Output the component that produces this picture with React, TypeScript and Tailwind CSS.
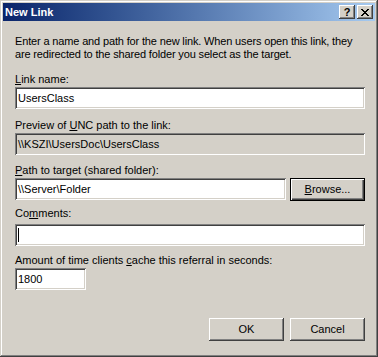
const sunken =
  'shadow-[inset_1px_1px_0_#808080,inset_-1px_-1px_0_#ffffff,inset_2px_2px_0_#404040,inset_-2px_-2px_0_#d4d0c8]'
const raised =
  'shadow-[inset_-1px_-1px_0_#404040,inset_1px_1px_0_#ffffff,inset_-2px_-2px_0_#808080,inset_2px_2px_0_#d4d0c8]'

// classic close glyph, one row per entry
const closeRows = [
  [0, 1, 6, 7],
  [1, 2, 5, 6],
  [2, 3, 4, 5],
  [3, 4],
  [2, 3, 4, 5],
  [1, 2, 5, 6],
  [0, 1, 6, 7],
]

function CloseGlyph() {
  return (
    <svg width="8" height="7" viewBox="0 0 8 7" shapeRendering="crispEdges">
      {closeRows.map((row, y) =>
        row.map((x) => <rect key={`${y}-${x}`} x={x} y={y} width="1" height="1" fill="#000" />),
      )}
    </svg>
  )
}

function TitleBar() {
  return (
    <div className="h-[18px] flex items-center bg-gradient-to-r from-[#0a246a] to-[#a6caf0] pl-[2px] pr-[2px]">
      <span className="flex-1 text-white font-bold text-[11px] leading-[18px]">New Link</span>
      <div className="flex gap-[2px]">
        <div className={`w-[16px] h-[14px] bg-[#d4d0c8] ${raised} flex items-center justify-center`}>
          <span className="font-bold text-[11px] leading-[11px] text-black">?</span>
        </div>
        <div className={`w-[16px] h-[14px] bg-[#d4d0c8] ${raised} flex items-center justify-center`}>
          <CloseGlyph />
        </div>
      </div>
    </div>
  )
}

function Field({ value, width = 'w-[350px]', readOnly = false, caret = false }: {
  value: string
  width?: string
  readOnly?: boolean
  caret?: boolean
}) {
  return (
    <div
      className={`${width} h-[22px] ${sunken} ${readOnly ? 'bg-[#d4d0c8]' : 'bg-white'} flex items-center pl-[3px] shrink-0`}
    >
      {caret ? <div className="w-px h-[14px] bg-black" /> : <span className="whitespace-nowrap">{value}</span>}
    </div>
  )
}

function Button({ children, isDefault = false }: { children: React.ReactNode; isDefault?: boolean }) {
  return (
    <div
      className={`w-[75px] h-[23px] bg-[#d4d0c8] flex items-center justify-center shrink-0 ${
        isDefault
          ? 'border border-black shadow-[inset_1px_1px_0_#ffffff,inset_-1px_-1px_0_#404040,inset_-2px_-2px_0_#808080]'
          : raised
      }`}
    >
      {children}
    </div>
  )
}

export default function App() {
  return (
    <div
      className="w-[378px] h-[357px] bg-[#d4d0c8] p-[3px] flex flex-col text-[11px] leading-[13px] text-black font-['Liberation_Sans',Arial,sans-serif] shadow-[inset_-1px_-1px_0_#404040,inset_1px_1px_0_#d4d0c8,inset_-2px_-2px_0_#808080,inset_2px_2px_0_#ffffff]"
    >
      <TitleBar />
      <div className="flex flex-col pl-[12px]">
        <p className="mt-[14px] whitespace-nowrap tracking-[-0.15px]">
          Enter a name and path for the new link. When users open this link, they
          <br />
          are redirected to the shared folder you select as the target.
        </p>

        <label className="mt-[12px]">
          <u>L</u>ink name:
        </label>
        <div className="mt-[1px]">
          <Field value="UsersClass" />
        </div>

        <label className="mt-[10px]">
          Preview of <u>U</u>NC path to the link:
        </label>
        <div className="mt-[1px]">
          <Field value="\\KSZI\UsersDoc\UsersClass" readOnly />
        </div>

        <label className="mt-[9px]">
          <u>P</u>ath to target (shared folder):
        </label>
        <div className="mt-[1px] w-[350px] flex gap-[4px]">
          <Field value="\\Server\Folder" width="w-[271px]" />
          <Button isDefault>
            <span>
              <u>B</u>rowse...
            </span>
          </Button>
        </div>

        <label className="mt-[6px]">
          Co<u>m</u>ments:
        </label>
        <div className="mt-[4px]">
          <Field value="" caret />
        </div>

        <label className="mt-[8px]">
          Amount of time clients <u>c</u>ache this referral in seconds:
        </label>
        <div className="mt-[1px]">
          <Field value="1800" width="w-[71px]" />
        </div>

        <div className="mt-[28px] w-[350px] flex justify-end gap-[6px]">
          <Button>OK</Button>
          <Button>Cancel</Button>
        </div>
      </div>
    </div>
  )
}
